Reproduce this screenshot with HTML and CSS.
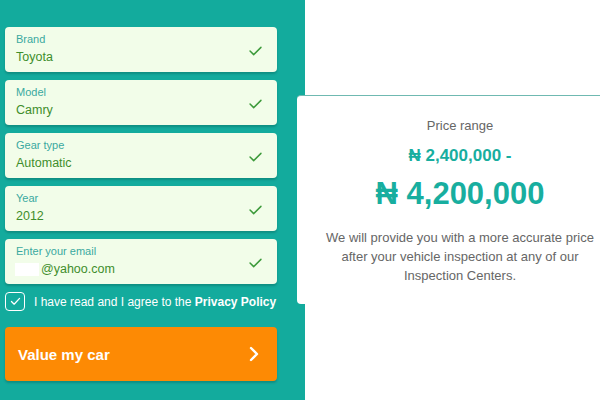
FILE: index.html
```html
<!DOCTYPE html>
<html>
<head>
<meta charset="utf-8">
<link rel="stylesheet" href="styles.css">
</head>
<body>
<div class="page">
  <div class="form-panel">
    <div class="field">
      <div class="field-text"><div class="label">Brand</div><div class="value">Toyota</div></div>
      <svg class="check" viewBox="0 0 14 11"><path d="M1 5.5 L5 9.5 L13 1.5" /></svg>
    </div>
    <div class="field">
      <div class="field-text"><div class="label">Model</div><div class="value">Camry</div></div>
      <svg class="check" viewBox="0 0 14 11"><path d="M1 5.5 L5 9.5 L13 1.5" /></svg>
    </div>
    <div class="field">
      <div class="field-text"><div class="label">Gear type</div><div class="value">Automatic</div></div>
      <svg class="check" viewBox="0 0 14 11"><path d="M1 5.5 L5 9.5 L13 1.5" /></svg>
    </div>
    <div class="field">
      <div class="field-text"><div class="label">Year</div><div class="value">2012</div></div>
      <svg class="check" viewBox="0 0 14 11"><path d="M1 5.5 L5 9.5 L13 1.5" /></svg>
    </div>
    <div class="field">
      <div class="field-text"><div class="label">Enter your email</div><div class="value"><span class="redact"></span>@yahoo.com</div></div>
      <svg class="check" viewBox="0 0 14 11"><path d="M1 5.5 L5 9.5 L13 1.5" /></svg>
    </div>
    <div class="agree">
      <span class="box"><svg viewBox="0 0 12 10"><path d="M1.5 5 L4.5 8 L10.5 1.5" /></svg></span>
      <span>I have read and I agree to the <b>Privacy Policy</b></span>
    </div>
    <div class="button">
      <span>Value my car</span>
      <svg class="chev" viewBox="0 0 10 16"><path d="M2 2 L8 8 L2 14" /></svg>
    </div>
  </div>
  <div class="result-area">
    <div class="result-card">
      <div class="range-title">Price range</div>
      <div class="price-low">₦ 2,400,000 -</div>
      <div class="price-high">₦ 4,200,000</div>
      <p class="note">We will provide you with a more accurate price after your vehicle inspection at any of our Inspection Centers.</p>
    </div>
  </div>
</div>
</body>
</html>
```

FILE: styles.css
```css
html, body {
  margin: 0;
  padding: 0;
  background: #ffffff;
  overflow: hidden;
}
body {
  font-family: "Liberation Sans", Arial, sans-serif;
  width: 600px;
  height: 400px;
}
.page {
  display: flex;
  width: 600px;
  height: 400px;
}
.form-panel {
  flex: 0 0 305px;
  box-sizing: border-box;
  height: 400px;
  background: #13ab9d;
  padding: 27px 28px 0 5px;
  display: flex;
  flex-direction: column;
}
.field {
  height: 45px;
  box-sizing: border-box;
  background: #f2fde9;
  border-radius: 4px;
  box-shadow: 0 2px 2px rgba(0, 60, 50, 0.25);
  padding: 6px 15px 0 11px;
  display: flex;
  align-items: center;
  justify-content: space-between;
  margin-bottom: 8px;
}
.field-text {
  align-self: flex-start;
}
.label {
  font-size: 11px;
  line-height: 13px;
  color: #3aa9a0;
}
.value {
  font-size: 12.5px;
  line-height: 17px;
  margin-top: 3px;
  color: #3f8e2c;
  display: flex;
  align-items: center;
}
.redact {
  display: inline-block;
  width: 24px;
  height: 13px;
  background: #ffffff;
  margin-left: -1px;
  margin-right: 2px;
}
.check {
  width: 13px;
  height: 10px;
  margin-top: -4px;
  fill: none;
  stroke: #3c9a3a;
  stroke-width: 1.6;
  stroke-linecap: round;
  stroke-linejoin: round;
}
.agree {
  display: flex;
  align-items: center;
  height: 19px;
  color: #ffffff;
  font-size: 12px;
  white-space: nowrap;
}
.agree b {
  font-weight: bold;
}
.box {
  box-sizing: border-box;
  width: 20px;
  height: 19px;
  border: 1.5px solid #ffffff;
  border-radius: 4px;
  display: flex;
  align-items: center;
  justify-content: center;
  margin-right: 9px;
}
.box svg {
  width: 11px;
  height: 9px;
  fill: none;
  stroke: #ffffff;
  stroke-width: 1.4;
  stroke-linecap: round;
  stroke-linejoin: round;
}
.button {
  margin-top: 16px;
  height: 54px;
  background: #fd8a04;
  border-radius: 4px;
  box-shadow: 0 2px 2px rgba(0, 60, 50, 0.25);
  display: flex;
  align-items: center;
  justify-content: space-between;
  padding: 0 18px 0 13px;
  color: #ffffff;
  font-size: 15px;
  font-weight: bold;
}
.chev {
  width: 10px;
  height: 16px;
  fill: none;
  stroke: #ffffff;
  stroke-width: 2.4;
  stroke-linecap: round;
  stroke-linejoin: round;
}
.result-area {
  flex: 1;
  min-width: 0;
  padding-top: 95px;
  background: #ffffff;
}
.result-card {
  margin-left: -8px;
  width: 326px;
  height: 209px;
  box-sizing: border-box;
  background: #ffffff;
  border-top: 1px solid #6fb9b1;
  border-radius: 4px 0 0 4px;
  text-align: center;
  padding-top: 22px;
}
.range-title {
  font-size: 13px;
  line-height: 16px;
  color: #666666;
}
.price-low {
  margin-top: 12px;
  font-size: 17px;
  line-height: 20px;
  font-weight: bold;
  color: #18ae9f;
}
.price-high {
  margin-top: 10px;
  font-size: 31px;
  line-height: 36px;
  font-weight: bold;
  color: #18ae9f;
}
.note {
  margin: 16px 0 0 0;
  font-size: 13px;
  line-height: 19px;
  color: #666666;
  padding: 0 26px;
}
```
